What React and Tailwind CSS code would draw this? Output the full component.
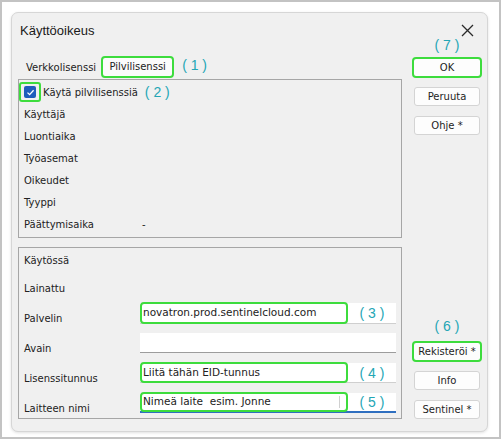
import React from "react";

const UI = { fontFamily: '"DejaVu Sans", sans-serif' };
const NOTE = { fontFamily: '"Liberation Sans", Arial, sans-serif' };

function Note({ children, className = "" }) {
  return (
    <span style={NOTE} className={`text-[14px] leading-[14px] text-[#24a6b5] whitespace-pre ${className}`}>
      {children}
    </span>
  );
}

function Btn({ children, hot }) {
  return hot ? (
    <div className="w-[70px] h-[21px] rounded-[4px] border-2 border-[#3ddc3d] bg-[#fdfdfd] flex items-center justify-center text-[10px] text-[#1e1e1e]">
      {children}
    </div>
  ) : (
    <div className="w-[66px] h-[19px] rounded-[3px] border border-[#d4d4d4] bg-[#fdfdfd] flex items-center justify-center text-[10px] text-[#1e1e1e]">
      {children}
    </div>
  );
}

function InfoRow({ label, value }) {
  return (
    <div className="h-[22px] flex items-center text-[10px] text-[#222]">
      <span className="w-[118px]">{label}</span>
      {value && <span>{value}</span>}
    </div>
  );
}

function Field({ label, text, note, underline, caret, tall }) {
  const bottom = underline
    ? "border-b-2 border-[#2f6fc0]"
    : note
    ? "border-b border-[#cfcfcf]"
    : "border-b border-[#9c9c9c]";
  return (
    <div className="h-[30px] flex items-start text-[10px] text-[#222]">
      <span className="w-[116px] mt-[9px] leading-[14px]">{label}</span>
      <div className={`flex-1 ${tall ? "h-[21px]" : "h-[20px]"} bg-white flex ${bottom}`}>
        {note && (
          <>
            <div className="relative w-[208px] h-[calc(100%+2px)] -mt-[1px] rounded-[4px] border-2 border-[#3ddc3d] flex items-center pl-[1px] text-[10.5px] whitespace-pre">
              {text}
              {caret && <span className="absolute right-[6px] top-[2px] bottom-[2px] w-px bg-[#d0d0d0]" />}
            </div>
            <div className="flex-1 flex items-center justify-center">
              <Note>{note}</Note>
            </div>
          </>
        )}
      </div>
    </div>
  );
}

export default function App() {
  return (
    <div className="w-[501px] h-[439px] border-2 border-[#c3c3c3] bg-white pt-[10px] pl-[9px]" style={UI}>
      <div className="w-[477px] h-[420px] rounded-[7px] border border-[#d6d6d6] bg-[#f0f0f0] shadow-[0_1px_3px_rgba(0,0,0,0.12)] flex flex-col">
        {/* title bar */}
        <div className="h-[24px] pt-[10px] pl-[8px] pr-[13px] flex items-start justify-between">
          <span style={NOTE} className="text-[13px] leading-[16px] text-[#1a1a1a]">Käyttöoikeus</span>
          <svg width="13" height="13" viewBox="0 0 13 13" className="mt-[1px]">
            <path d="M1 1 L12 12 M12 1 L1 12" stroke="#2a2a2a" strokeWidth="1.3" />
          </svg>
        </div>

        <div className="flex-1 flex pl-[6px]">
          {/* left column */}
          <div className="w-[384px] pt-[18px] flex flex-col">
            {/* tabs */}
            <div className="h-[24px] flex items-center text-[10px] text-[#222]">
              <span className="ml-[8px] mt-[1px]">Verkkolisenssi</span>
              <div className="ml-[5px] -mt-[1px] w-[73px] h-[22px] rounded-[4px] border-2 border-[#3ddc3d] bg-[#fbfbfb] flex items-center justify-center">
                Pilvilisenssi
              </div>
              <Note className="ml-[8px] -mt-[4px]">( 1 )</Note>
            </div>

            {/* cloud licence info */}
            <div className="h-[159px] border border-[#a6a6a6] pl-[5px] pt-[1px] flex flex-col">
              <div className="h-[22px] flex items-center -ml-[5px] text-[10px] text-[#222]">
                <div className="w-[22px] h-[20px] rounded-[3px] border-2 border-[#3ddc3d] flex items-center justify-center">
                  <div className="w-[12px] h-[12px] rounded-[2px] bg-[#1f5cbc] flex items-center justify-center">
                    <svg width="9" height="9" viewBox="0 0 9 9">
                      <path d="M1.5 4.6 L3.6 6.6 L7.6 2.2" fill="none" stroke="#fff" strokeWidth="1.3" />
                    </svg>
                  </div>
                </div>
                <span className="ml-[2px]">Käytä pilvilisenssiä</span>
                <Note className="ml-[7px]">( 2 )</Note>
              </div>
              <InfoRow label="Käyttäjä" />
              <InfoRow label="Luontiaika" />
              <InfoRow label="Työasemat" />
              <InfoRow label="Oikeudet" />
              <InfoRow label="Tyyppi" />
              <InfoRow label="Päättymisaika" value="-" />
            </div>

            {/* registration fields */}
            <div className="mt-[9px] h-[172px] border border-[#a6a6a6] pl-[5px] pr-[5px] pt-[6px] flex flex-col text-[10px] text-[#222]">
              <span className="leading-[14px]">Käytössä</span>
              <span className="leading-[14px] mt-[14px]">Lainattu</span>
              <div className="mt-[7px] flex flex-col">
                <Field label="Palvelin" text="novatron.prod.sentinelcloud.com" note="( 3 )" tall />
                <Field label="Avain" />
                <Field label="Lisenssitunnus" text="Liitä tähän EID-tunnus" note="( 4 )" />
                <Field label="Laitteen nimi" text="Nimeä laite  esim. Jonne" note="( 5 )" underline caret />
              </div>
            </div>
          </div>

          {/* buttons */}
          <div className="w-[76px] ml-[7px] pb-[12px] flex flex-col items-center">
            <Note className="mt-[1px]">( 7 )</Note>
            <div className="mt-[5px]"><Btn hot>OK</Btn></div>
            <div className="mt-[9px]"><Btn>Peruuta</Btn></div>
            <div className="mt-[10px]"><Btn>Ohje *</Btn></div>
            <div className="flex-1" />
            <Note>( 6 )</Note>
            <div className="mt-[8px]"><Btn hot>Rekisteröi *</Btn></div>
            <div className="mt-[9px]"><Btn>Info</Btn></div>
            <div className="mt-[10px]"><Btn>Sentinel *</Btn></div>
          </div>
        </div>
      </div>
    </div>
  );
}
